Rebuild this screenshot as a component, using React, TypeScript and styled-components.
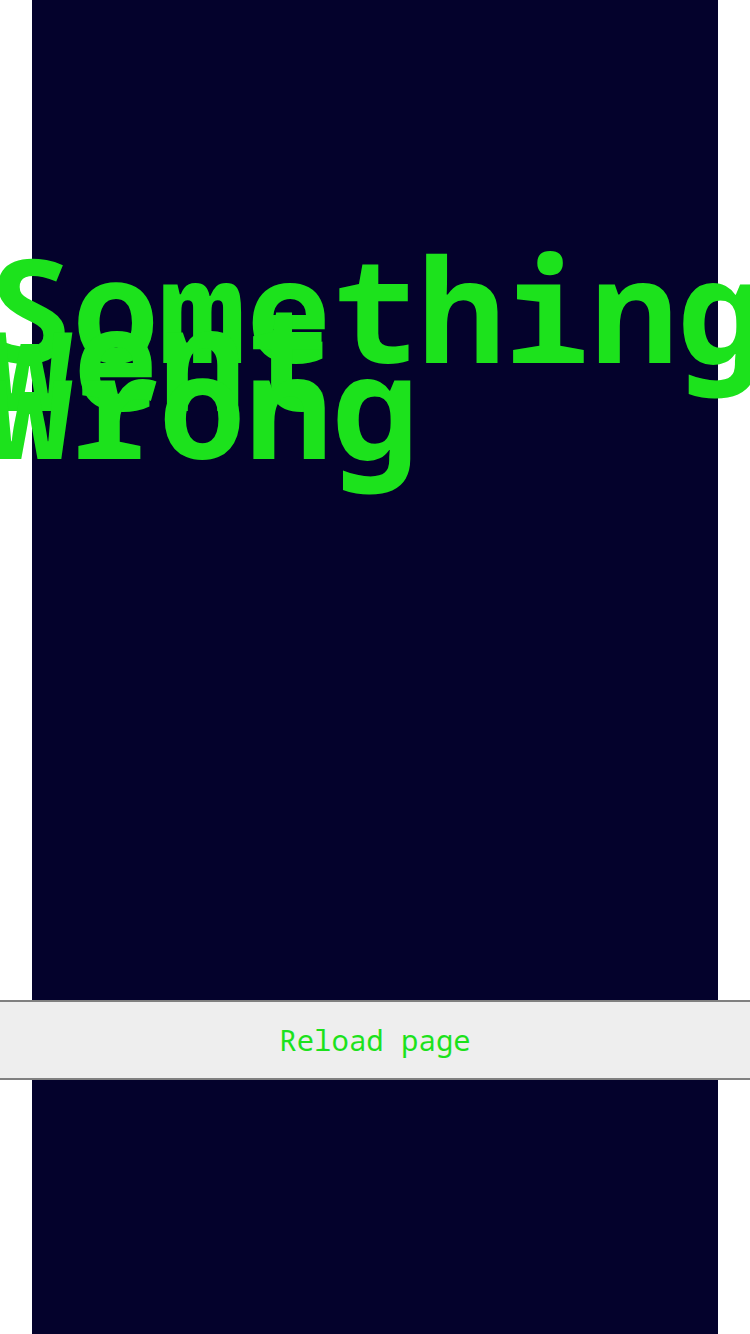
import styled, { createGlobalStyle } from 'styled-components';

const GlobalStyle = createGlobalStyle`
  html, body {
    margin: 0;
    padding: 0;
    background: #ffffff;
  }
`;

const MONO = `"Noto Sans Mono", "DejaVu Sans Mono", "Liberation Mono", monospace`;

export default function App() {
  const reload = () => {
    window.location.reload();
  };

  return (
    <>
      <GlobalStyle />
      <Panel>
        <Title>Something went wrong</Title>
        <ReloadButton type="button" onClick={reload}>
          Reload page
        </ReloadButton>
      </Panel>
    </>
  );
}

const Panel = styled.main`
  display: flex;
  flex-direction: column;
  align-items: center;
  box-sizing: border-box;
  min-height: 100vh;
  margin: 0 32px;
  padding: 283px 0 254px;
  background-color: #04022c;
`;
const Title = styled.h1`
  margin: 0;
  font-family: ${MONO};
  font-size: 144px;
  font-weight: 700;
  line-height: 48px;
  color: #1ce21c;
  text-align: left;
`;
const ReloadButton = styled.button`
  margin-top: auto;
  width: 100vw;
  box-sizing: content-box;
  padding: 18px 0;
  border: 2px solid #808080;
  background-color: #eeeeee;
  font-family: ${MONO};
  font-size: 29px;
  line-height: 40px;
  color: #1ce21c;
  cursor: pointer;
`;
